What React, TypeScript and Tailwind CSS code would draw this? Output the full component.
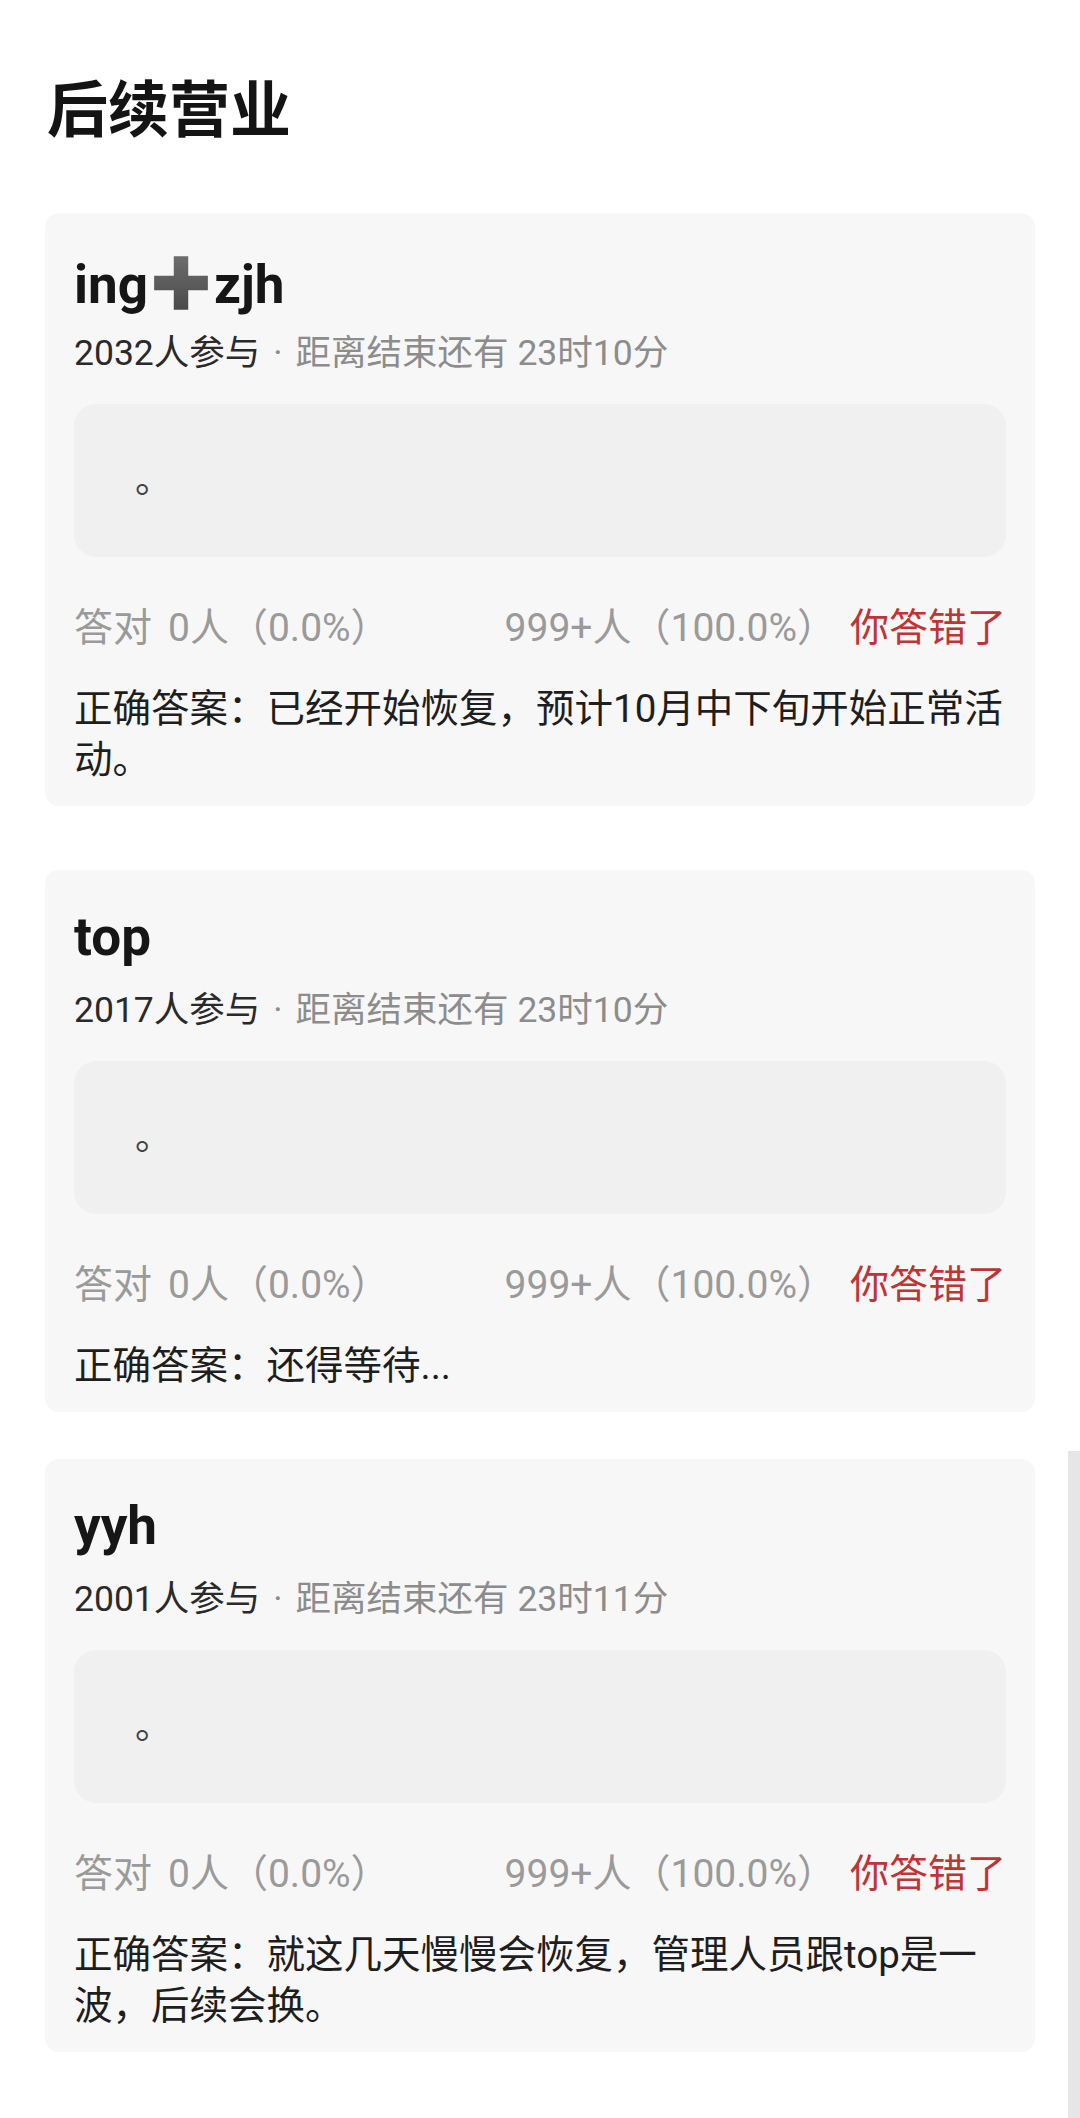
import React from "react";

type Poll = {
  id: number;
  name: React.ReactNode;
  joined: string;
  left: string;
  answer: string;
  cardClass: string;
};

// gray heavy plus, the emoji in the first poll title
function HeavyPlus() {
  return (
    <svg
      viewBox="0 0 60 60"
      className="mx-[2px] inline-block h-[62px] w-[62px] align-[-11px]"
    >
      <defs>
        <linearGradient id="plusFill" x1="0" y1="0" x2="0" y2="1">
          <stop offset="0" stopColor="#6d6d6d" />
          <stop offset="1" stopColor="#4a4a4a" />
        </linearGradient>
      </defs>
      <path
        d="M23 4h14v19h19v14H37v19H23V37H4V23h19z"
        fill="url(#plusFill)"
      />
    </svg>
  );
}

const polls: Poll[] = [
  {
    id: 1,
    name: (
      <>
        ing
        <HeavyPlus />
        zjh
      </>
    ),
    joined: "2032人参与",
    left: "23时10分",
    answer: "已经开始恢复，预计10月中下旬开始正常活动。",
    cardClass: "mt-[66px]",
  },
  {
    id: 2,
    name: "top",
    joined: "2017人参与",
    left: "23时10分",
    answer: "还得等待...",
    cardClass: "mt-[64px]",
  },
  {
    id: 3,
    name: "yyh",
    joined: "2001人参与",
    left: "23时11分",
    answer: "就这几天慢慢会恢复，管理人员跟top是一波，后续会换。",
    cardClass: "mt-[47px]",
  },
];

function PollCard({ poll }: { poll: Poll }) {
  return (
    <div
      className={`rounded-[14px] bg-[#f7f7f7] px-[29px] pb-[21px] pt-[39px] ${poll.cardClass}`}
    >
      <h3 className="h-[56px] text-[53px] font-bold leading-[56px] text-[#161616]">
        {poll.name}
      </h3>

      <p className="mt-[21px] text-[35.5px] leading-[48px] text-[#8c8c8c]">
        <span className="text-[#2a2a2a]">{poll.joined}</span>
        <span className="mx-[13px]">·</span>
        距离结束还有 {poll.left}
      </p>

      {/* answer box, the user only typed a full stop */}
      <div className="mt-[27px] flex h-[153px] items-center rounded-[22px] bg-[#f0f0f0] pl-[61px]">
        <span className="text-[37px] text-[#444]">。</span>
      </div>

      <div className="mt-[45px] flex items-center text-[39px] leading-[52px] text-[#9a9a9a]">
        <span>
          答对<span className="ml-[16px]">0人（0.0%）</span>
        </span>
        <span className="ml-auto">999+人（100.0%）</span>
        <span className="ml-[14px] text-[#bf3434]">你答错了</span>
      </div>

      <p className="mt-[29px] text-[38.5px] leading-[51px] text-[#1e1e1e]">
        正确答案：{poll.answer}
      </p>
    </div>
  );
}

export default function App() {
  return (
    <div
      className="relative min-h-[2118px] bg-white px-[45px] pb-[69px]"
      style={{
        fontFamily: 'Roboto, "Noto Sans CJK SC", "Noto Sans", sans-serif',
      }}
    >
      <h1 className="pl-[2px] pt-[75px] text-[61px] font-bold leading-[72px] text-[#141414]">
        后续营业
      </h1>

      {polls.map((poll) => (
        <PollCard key={poll.id} poll={poll} />
      ))}

      {/* scrollbar strip on the right edge */}
      <div className="absolute right-0 top-[1451px] h-[667px] w-[12px] bg-[#e6e6e6]" />
    </div>
  );
}
